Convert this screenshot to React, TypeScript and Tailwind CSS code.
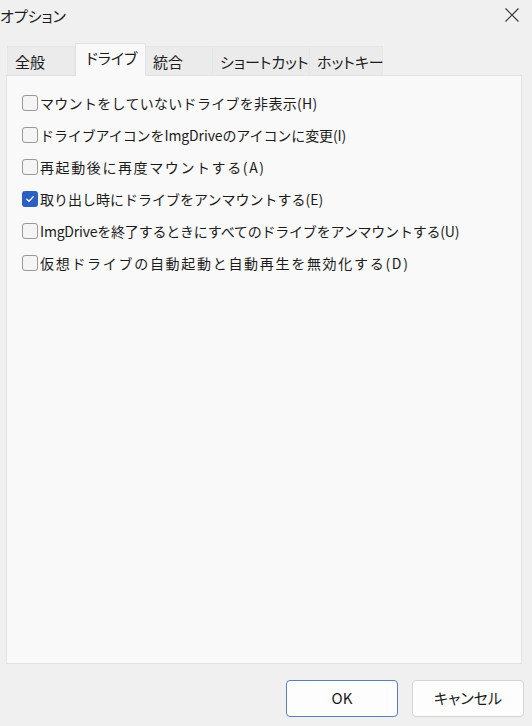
import React from 'react';

const JP = '"Noto Sans CJK JP", "Noto Sans", sans-serif';

const tabs = [
  { label: '全般', w: 'w-[68px]' },
  { label: 'ドライブ', w: 'w-[71px]', active: true },
  { label: '統合', w: 'w-[67px]' },
  { label: 'ショートカット', w: 'w-[97px]' },
  { label: 'ホットキー', w: 'w-[73px]' },
];

const options = [
  { label: 'マウントをしていないドライブを非表示(H)', checked: false, track: 'tracking-[0.3px]' },
  { label: 'ドライブアイコンをImgDriveのアイコンに変更(I)', checked: false, track: 'tracking-[-0.1px]' },
  { label: '再起動後に再度マウントする(A)', checked: false, track: 'tracking-[1.6px]' },
  { label: '取り出し時にドライブをアンマウントする(E)', checked: true, track: 'tracking-normal' },
  { label: 'ImgDriveを終了するときにすべてのドライブをアンマウントする(U)', checked: false, track: 'tracking-[-0.2px]' },
  { label: '仮想ドライブの自動起動と自動再生を無効化する(D)', checked: false, track: 'tracking-[1.7px]' },
];

function Checkbox({ checked }: { checked: boolean }) {
  if (checked) {
    return (
      <span className="flex h-[16px] w-[16px] shrink-0 items-center justify-center rounded-[3px] bg-[#2b5fc2]">
        <svg width="10" height="10" viewBox="0 0 10 10" fill="none">
          <path d="M1.8 5.2 L4 7.3 L8.2 2.8" stroke="#fff" strokeWidth="1.3" strokeLinecap="round" strokeLinejoin="round" />
        </svg>
      </span>
    );
  }
  return <span className="h-[16px] w-[16px] shrink-0 rounded-[3px] border border-[#9a9a9a] bg-[#f4f4f4]" />;
}

export default function App() {
  return (
    <div
      className="flex h-[726px] w-[532px] flex-col bg-[#f0f0f0] text-[#1b1b1b]"
      style={{ fontFamily: JP }}
    >
      {/* title bar */}
      <div className="flex h-[30px] items-center justify-between pr-[12px]">
        <span className="text-[15px] leading-none [font-feature-settings:'palt']">オプション</span>
        <svg width="16" height="16" viewBox="0 0 16 16" fill="none">
          <path d="M1.5 1.5 L14.5 14.5 M14.5 1.5 L1.5 14.5" stroke="#333" strokeWidth="1.1" />
        </svg>
      </div>

      {/* tabs */}
      <div className="mt-[13px] flex items-end pl-[7px]">
        {tabs.map((t) =>
          t.active ? (
            <div
              key={t.label}
              className={`${t.w} relative z-10 -mb-px flex h-[33px] items-start whitespace-nowrap border border-b-0 border-[#e3e3e3] bg-[#f9f9f9] pl-[10px] pt-[3px] text-[15px] [font-feature-settings:'palt']`}
            >
              {t.label}
            </div>
          ) : (
            <div
              key={t.label}
              className={`${t.w} flex h-[29px] items-center whitespace-nowrap border-r border-t border-[#e6e6e6] bg-[#ebebeb] pl-[7px] pt-[2px] text-[15px] [font-feature-settings:'palt'] first:border-l`}
            >
              {t.label}
            </div>
          )
        )}
      </div>

      {/* panel */}
      <div className="ml-[6px] h-[589px] w-[516px] border border-[#e3e3e3] bg-[#f9f9f9] pl-[15px] pt-[19px]">
        <div className="flex flex-col gap-[16px]">
          {options.map((o) => (
            <div key={o.label} className="flex h-[16px] items-center gap-[2px]">
              <Checkbox checked={o.checked} />
              <span className={`whitespace-nowrap text-[14px] leading-none ${o.track}`}>{o.label}</span>
            </div>
          ))}
        </div>
      </div>

      {/* buttons */}
      <div className="mt-[16px] flex justify-end gap-[14px] pr-[8px]">
        <button className="h-[37px] w-[112px] rounded-[4px] border border-[#5a7fb8] bg-[#fdfdfd] text-[15px]">
          OK
        </button>
        <button className="h-[37px] w-[112px] rounded-[4px] border border-[#d3d3d3] bg-[#fdfdfd] text-[15px] [font-feature-settings:'palt']">
          キャンセル
        </button>
      </div>
    </div>
  );
}
